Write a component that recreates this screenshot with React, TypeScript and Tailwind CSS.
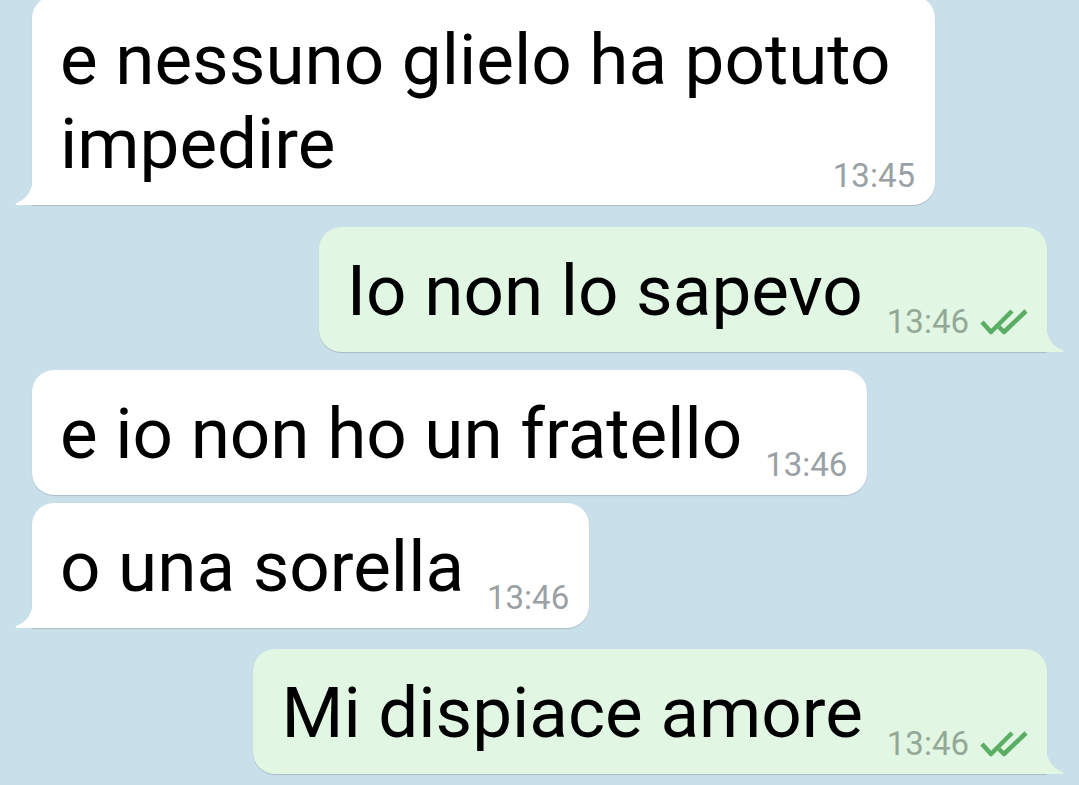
import React from "react";

const font = { fontFamily: "Roboto, 'Liberation Sans', sans-serif" };

const Ticks = () => (
  <svg width="50" height="28" viewBox="0 0 50 28" className="ml-[10px] mb-[4px]">
    <path d="M3 14 L12 24 L33 3" fill="none" stroke="#5aae63" strokeWidth="4.5" strokeLinejoin="round" />
    <path d="M20 19 L25 24 L47 3" fill="none" stroke="#5aae63" strokeWidth="4.5" strokeLinejoin="round" />
  </svg>
);

const TailLeft = () => (
  <svg width="20" height="32" viewBox="0 0 20 32" className="absolute -left-[17px] bottom-0">
    <path d="M18 0 L18 2 C18 20 10 27 1 30 Q0 31 1.5 32 L20 32 L20 0 Z" fill="#ffffff" />
  </svg>
);

const TailRight = () => (
  <svg width="20" height="32" viewBox="0 0 20 32" className="absolute -right-[17px] bottom-0">
    <path d="M2 0 L2 2 C2 20 10 27 19 30 Q20 31 18.5 32 L0 32 L0 0 Z" fill="#e2f6e4" />
  </svg>
);

const Time = ({ t, out }: { t: string; out?: boolean }) => (
  <span
    className={`text-[33px] leading-[36px] whitespace-nowrap ${out ? "text-[#93a996]" : "text-[#9aa1a4]"}`}
  >
    {t}
  </span>
);

const In = ({ text, t, tail }: { text: string; t: string; tail?: boolean }) => (
  <div
    className={`relative bg-white rounded-[22px] ${tail ? "rounded-bl-none" : ""} shadow-[0_1px_1px_rgba(0,0,0,0.16)] flex items-end pl-[28px] pr-[20px] pt-[22px] pb-[12px]`}
  >
    {tail && <TailLeft />}
    <span className="text-[71px] leading-[84px] text-black mb-[7px] mr-[23px] whitespace-nowrap">{text}</span>
    <Time t={t} />
  </div>
);

const Out = ({ text }: { text: string }) => (
  <div className="relative bg-[#e2f6e4] rounded-[22px] rounded-br-none shadow-[0_1px_1px_rgba(0,0,0,0.16)] flex items-end pl-[28px] pr-[18px] pt-[22px] pb-[12px]">
    <TailRight />
    <span className="text-[71px] leading-[84px] text-black mb-[7px] mr-[24px] whitespace-nowrap">{text}</span>
    <Time t="13:46" out />
    <Ticks />
  </div>
);

export default function App() {
  return (
    <div className="w-[1079px] h-[785px] overflow-hidden bg-[#c9e0eb]" style={font}>
      <div className="flex flex-col -mt-[4px]">
        <div className="pl-[32px] flex">
          <div className="relative bg-white rounded-[22px] rounded-bl-none shadow-[0_1px_1px_rgba(0,0,0,0.16)] flex flex-col pl-[28px] pr-[20px] pt-[22px] pb-[12px] w-[903px]">
            <TailLeft />
            <span className="text-[71px] leading-[84px] text-black">
              e nessuno glielo ha potuto
              <br />
              impedire
            </span>
            <div className="self-end -mt-[28px] -mb-[1px]">
              <Time t="13:45" />
            </div>
          </div>
        </div>
        <div className="pr-[32px] flex justify-end mt-[22px]">
          <Out text="Io non lo sapevo" />
        </div>
        <div className="pl-[32px] flex mt-[18px]">
          <In text="e io non ho un fratello" t="13:46" />
        </div>
        <div className="pl-[32px] flex mt-[8px]">
          <In text="o una sorella" t="13:46" tail />
        </div>
        <div className="pr-[32px] flex justify-end mt-[21px]">
          <Out text="Mi dispiace amore" />
        </div>
      </div>
    </div>
  );
}
